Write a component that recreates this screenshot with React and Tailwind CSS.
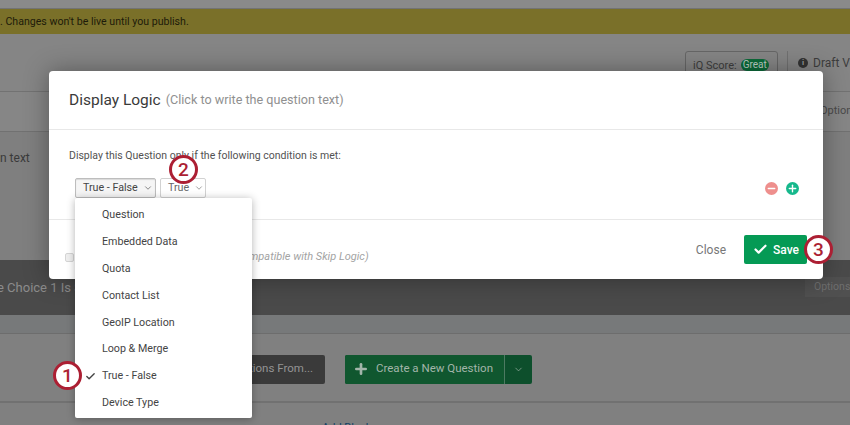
import React from "react";
import { ChevronDown, Check, Plus, Minus } from "lucide-react";

const menuItems = ["Question", "Embedded Data", "Quota", "Contact List", "GeoIP Location", "Loop & Merge", "True - False", "Device Type"];

function Callout({ n, className }) {
  return (
    <div className={`absolute w-[29px] h-[29px] rounded-full bg-white border-[3px] border-[#ac1f33] flex items-center justify-center text-[19px] leading-none font-medium text-[#ac1f33] ${className}`}>
      {n}
    </div>
  );
}

export default function App() {
  return (
    <div className="relative w-[850px] h-[425px] overflow-hidden bg-[#808080] flex flex-col font-['Roboto',sans-serif] text-[#2c2c2c]">
      <div className="h-[9px] bg-[#8a8a8a] border-b border-[#737373] shrink-0"></div>
      <div className="h-[25px] bg-[#7a7029] flex items-center text-[10.6px] text-[#1d1b0a] shrink-0">. Changes won't be live until you publish.</div>

      <div className="h-[58px] bg-[#858585] border-b border-[#727272] flex items-start pl-[685px] pt-[17px] shrink-0">
        <div className="w-[93px] h-[30px] shrink-0 border border-[#666] rounded-[3px] flex items-start pt-[7px] pl-[7px] gap-[4px] text-[11px] leading-[14px] text-[#3d3d3d]">
          iQ Score:
          <span className="px-[2px] h-[12px] rounded-full bg-[#0c6b3a] text-[#bfcfc6] text-[10px] leading-[12px]">Great</span>
        </div>
        <div className="w-px h-[30px] shrink-0 bg-[#707070] ml-[9px]"></div>
        <div className="w-[52px] shrink-0 ml-[10px] mt-[5px] flex items-center gap-[5px] text-[12px] leading-[14px] text-[#3d3d3d] whitespace-nowrap">
          <span className="w-[10px] h-[10px] shrink-0 rounded-full bg-[#333] text-[#999] text-[8px] leading-[10px] text-center font-bold">i</span>
          Draft Version
        </div>
      </div>

      <div className="h-[40px] bg-[#868686] border-b border-[#717171] flex items-center pl-[820px] text-[11px] text-[#4a4a4a] shrink-0">
        <span className="whitespace-nowrap">Options</span>
      </div>

      <div className="h-[128px] bg-[#7f7f7f] pt-[17px] text-[12px] text-[#3a3a3a] shrink-0">n text</div>

      <div className="h-[55px] bg-[#4a4a4a] flex items-center justify-between text-[12px] text-[#8c8c8c] shrink-0">
        <span className="whitespace-nowrap -ml-[3px] text-[13px]">e Choice 1 Is Selected</span>
        <span className="w-[45px] h-[20px] mb-[1px] bg-[#505050] text-[10.5px] text-[#6f6f6f] pl-[9px] leading-[20px]">Options</span>
      </div>

      <div className="h-[19px] bg-[#77797a] border-b border-[#6d6d6d] shrink-0"></div>

      <div className="h-[69px] bg-[#808080] border-b-2 border-[#717171] flex items-center pl-[232px] gap-[20px] shrink-0 pt-[3px]">
        <div className="w-[93px] h-[29px] rounded-[2px] bg-[#3a3a3a] text-[#949494] text-[11.5px] flex items-center justify-end pr-[12px]">tions From...</div>
        <div className="flex h-[29px] rounded-[2px] bg-[#0d4f2c] text-[#a3b5aa] text-[11.5px] whitespace-nowrap">
          <div className="w-[159px] flex items-center pl-[8px] gap-[7px] bg-[#10572f] rounded-l-[2px]">
            <Plus size={16} strokeWidth={4} />
            Create a New Question
          </div>
          <div className="w-[28px] border-l border-[#4d7a62] flex items-center justify-center">
            <ChevronDown size={11} strokeWidth={1.5} />
          </div>
        </div>
      </div>

      <div className="flex-1 bg-[#808080] pl-[322px] pt-[17px] text-[11px] text-[#123f66] whitespace-nowrap">Add Block</div>

      {/* modal */}
      <div className="absolute left-[49px] top-[71px] w-[774px] h-[208px] bg-white rounded-[4px] shadow-[0_0_24px_rgba(0,0,0,0.35)] flex flex-col">
        <div className="h-[59px] border-b border-[#e8e8e8] flex items-center pl-[20px] gap-[5px] pt-[1px] shrink-0">
          <span className="text-[15.5px] text-[#3a3a3a]">Display Logic</span>
          <span className="text-[12.6px] text-[#909090]">(Click to write the question text)</span>
        </div>
        <div className="h-[90px] border-b border-[#e8e8e8] pl-[20px] pt-[18px] shrink-0">
          <div className="text-[10.5px] leading-[15px] text-[#525252]">Display this Question only if the following condition is met:</div>
          <div className="flex items-center mt-[15px] ml-[6px] gap-[4px]">
            <div className="w-[81px] h-[20px] border border-[#bdbdbd] rounded-[2px] bg-[#f5f5f5] shadow-[inset_0_1px_1px_rgba(0,0,0,0.12)] flex items-center pl-[7px] gap-[5px] text-[10.7px] text-[#444] whitespace-nowrap">
              True - False <ChevronDown size={10} strokeWidth={1.5} className="shrink-0" />
            </div>
            <div className="w-[46px] h-[20px] border border-[#d2d2d2] rounded-[2px] flex items-center pl-[7px] gap-[5px] text-[10.7px] text-[#666]">
              True <ChevronDown size={10} strokeWidth={1.5} className="shrink-0" />
            </div>
            <div className="ml-auto mr-[24px] flex gap-[8px]">
              <div className="w-[13px] h-[13px] rounded-full bg-[#ee8f8d] flex items-center justify-center text-white"><Minus size={11} strokeWidth={3} /></div>
              <div className="w-[13px] h-[13px] rounded-full bg-[#16b88c] flex items-center justify-center text-white"><Plus size={11} strokeWidth={3} /></div>
            </div>
          </div>
        </div>
        <div className="flex-1 flex items-center pl-[16px] pr-[16px]">
          <div className="w-[9px] h-[9px] mt-[15px] border border-[#d5d5d5] rounded-[2px] bg-[#efefef]"></div>
          <span className="ml-[175px] mt-[15px] text-[11px] italic text-[#a3a3a3] whitespace-nowrap">mpatible with Skip Logic)</span>
          <span className="ml-auto text-[12px] text-[#777]">Close</span>
          <button className="ml-[18px] w-[63px] h-[29px] bg-[#059a55] rounded-[2px] text-white text-[12px] font-medium flex items-center pl-[9px] gap-[5px]">
            <Check size={15} strokeWidth={3.5} />
            Save
          </button>
        </div>
      </div>

      {/* dropdown */}
      <div className="absolute left-[75px] top-[198px] w-[177px] h-[220px] bg-white rounded-[2px] shadow-[0_1px_8px_rgba(0,0,0,0.3)] flex flex-col pt-[4px]">
        {menuItems.map((item) => (
          <div key={item} className="relative h-[26.8px] flex items-center pl-[27px] text-[10.7px] text-[#444]">
            {item === "True - False" && <Check size={11} strokeWidth={3} className="absolute left-[10px] text-[#444]" />}
            {item}
          </div>
        ))}
      </div>

      <Callout n="1" className="left-[53px] top-[361px]" />
      <Callout n="2" className="left-[169px] top-[155px]" />
      <Callout n="3" className="left-[804px] top-[235px]" />
    </div>
  );
}
